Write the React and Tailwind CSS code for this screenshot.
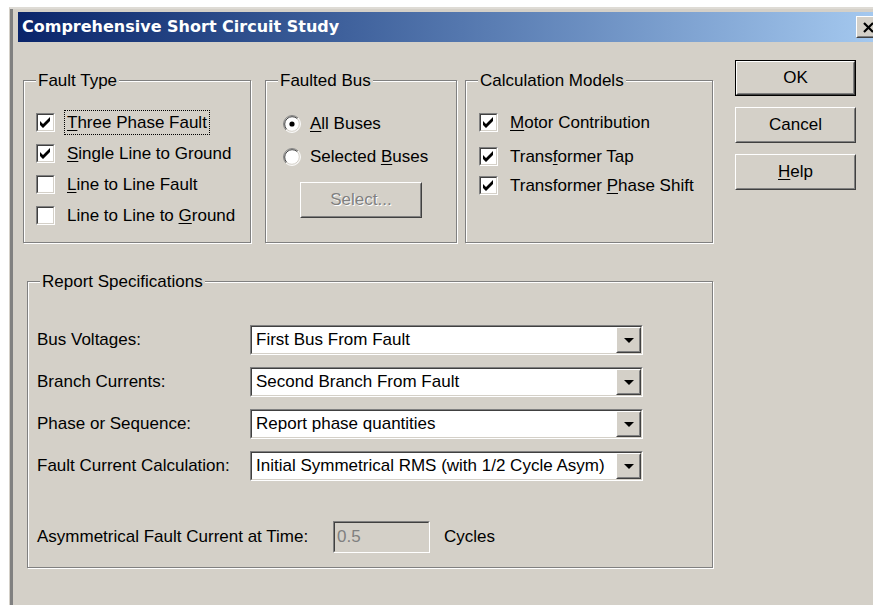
import React from 'react';

// classic 3D frames
const Raised = ({ className = '', children }) => (
  <div className={`border border-t-white border-l-white border-r-[#404040] border-b-[#404040] bg-[#d4d0c8] ${className}`}>
    <div className="w-full h-full border border-t-[#d4d0c8] border-l-[#d4d0c8] border-r-[#808080] border-b-[#808080] flex items-center justify-center">
      {children}
    </div>
  </div>
);

const Sunken = ({ className = '', inner = 'bg-white', children }) => (
  <div className={`border border-t-[#808080] border-l-[#808080] border-r-white border-b-white ${className}`}>
    <div className={`w-full h-full border border-t-[#404040] border-l-[#404040] border-r-[#d4d0c8] border-b-[#d4d0c8] ${inner}`}>
      {children}
    </div>
  </div>
);

const Group = ({ title, className = '', children }) => (
  <div className={`relative border border-[#808080] shadow-[inset_1px_1px_0_#fff,1px_1px_0_#fff] ${className}`}>
    <span className="absolute left-[12px] -top-[10px] bg-[#d4d0c8] px-[2px] leading-[20px] whitespace-nowrap">{title}</span>
    {children}
  </div>
);

const Key = ({ children }) => <span className="underline underline-offset-[2px] decoration-1">{children}</span>;

const CheckBox = ({ checked }) => (
  <Sunken className="w-[19px] h-[19px] shrink-0">
    {checked && (
      <svg width="15" height="15" viewBox="0 0 15 15" className="block">
        <polygon points="2,6 5,9 12,2 12,6 5,13 2,10" fill="#000" />
      </svg>
    )}
  </Sunken>
);

const Radio = ({ checked }) => (
  <svg width="18" height="18" viewBox="0 0 18 18" className="block shrink-0">
    <circle cx="9" cy="9" r="8" fill="#fff" />
    <path d="M2.99 15.01 A8.5 8.5 0 0 1 15.01 2.99" fill="none" stroke="#808080" strokeWidth="1" />
    <path d="M15.01 2.99 A8.5 8.5 0 0 1 2.99 15.01" fill="none" stroke="#fff" strokeWidth="1" />
    <path d="M3.7 14.3 A7.5 7.5 0 0 1 14.3 3.7" fill="none" stroke="#404040" strokeWidth="1" />
    <path d="M14.3 3.7 A7.5 7.5 0 0 1 3.7 14.3" fill="none" stroke="#d4d0c8" strokeWidth="1" />
    {checked && <circle cx="9" cy="9" r="2.6" fill="#000" />}
  </svg>
);

const Check = ({ checked, children, className = '' }) => (
  <div className={`flex items-center gap-[12px] h-[19px] whitespace-nowrap ${className}`}>
    <CheckBox checked={checked} />
    {children}
  </div>
);

const Combo = ({ value }) => (
  <Sunken className="w-[393px] h-[30px]">
    <div className="flex h-full items-center">
      <span className="flex-1 pl-[4px] whitespace-nowrap overflow-hidden">{value}</span>
      <Raised className="w-[25px] h-full">
        <svg width="10" height="5" viewBox="0 0 10 5" className="block">
          <polygon points="0,0 10,0 5,5" fill="#000" />
        </svg>
      </Raised>
    </div>
  </Sunken>
);

const reportRows = [
  ['Bus Voltages:', 'First Bus From Fault'],
  ['Branch Currents:', 'Second Branch From Fault'],
  ['Phase or Sequence:', 'Report phase quantities'],
  ['Fault Current Calculation:', 'Initial Symmetrical RMS (with 1/2 Cycle Asym)'],
];

export default function App() {
  return (
    <div className="w-[873px] h-[605px] overflow-hidden bg-white text-[17px] text-black font-['Liberation_Sans',Arial,sans-serif]">
      <div className="ml-[9px] mt-[7px] w-[900px] h-[640px] border-l border-l-[#d4d0c8] border-t-2 border-t-[#dedbd5] bg-[#d4d0c8]">
        <div className="h-full border-l-[3px] border-l-[#808080] pl-[5px] pt-[3px]">
          {/* title bar */}
          <div className="w-[864px] h-[30px] flex items-center bg-gradient-to-r from-[#0a246a] to-[#a6caf0]">
            <span className="flex-1 pl-[4px] font-bold text-[16px] text-white whitespace-nowrap font-['DejaVu_Sans',Verdana,sans-serif]">
              Comprehensive Short Circuit Study
            </span>
            <Raised className="w-[24px] h-[22px] mr-[2px]">
              <svg width="11" height="11" viewBox="0 0 11 11" className="block">
                <path d="M1 1 L10 10 M10 1 L1 10" stroke="#000" strokeWidth="2.2" />
              </svg>
            </Raised>
          </div>

          {/* dialog body */}
          <div className="flex items-start">
            <Group title="Fault Type" className="ml-[5px] mt-[38px] w-[228px] h-[163px]">
              <div className="flex flex-col gap-[12px] pt-[32px] pl-[12px]">
                <Check checked>
                  <span className="-ml-[3px] border border-dotted border-black px-[2px] leading-[23px]">
                    <Key>T</Key>hree Phase Fault
                  </span>
                </Check>
                <Check checked>
                  <span><Key>S</Key>ingle Line to Ground</span>
                </Check>
                <Check>
                  <span><Key>L</Key>ine to Line Fault</span>
                </Check>
                <Check>
                  <span>Line to Line to <Key>G</Key>round</span>
                </Check>
              </div>
            </Group>

            <Group title="Faulted Bus" className="ml-[14px] mt-[38px] w-[192px] h-[163px]">
              <div className="flex flex-col pt-[34px] pl-[17px]">
                <div className="flex items-center gap-[9px] h-[18px] whitespace-nowrap">
                  <Radio checked />
                  <span><Key>A</Key>ll Buses</span>
                </div>
                <div className="flex items-center gap-[9px] h-[18px] mt-[15px] whitespace-nowrap">
                  <Radio />
                  <span>Selected <Key>B</Key>uses</span>
                </div>
                <Raised className="ml-[17px] mt-[16px] w-[122px] h-[36px]">
                  <span className="text-[#808080] [text-shadow:1px_1px_0_#fff]">Select...</span>
                </Raised>
              </div>
            </Group>

            <Group title="Calculation Models" className="ml-[8px] mt-[38px] w-[248px] h-[163px]">
              <div className="flex flex-col pt-[32px] pl-[13px]">
                <Check checked className="gap-[11px]">
                  <span><Key>M</Key>otor Contribution</span>
                </Check>
                <Check checked className="gap-[11px] mt-[15px]">
                  <span>Trans<Key>f</Key>ormer Tap</span>
                </Check>
                <Check checked className="gap-[11px] mt-[10px]">
                  <span>Transformer <Key>P</Key>hase Shift</span>
                </Check>
              </div>
            </Group>

            <div className="ml-[22px] mt-[18px] flex flex-col gap-[11px]">
              <div className="border border-black">
                <Raised className="w-[119px] h-[34px]">OK</Raised>
              </div>
              <Raised className="w-[121px] h-[36px]">Cancel</Raised>
              <Raised className="w-[121px] h-[36px]">
                <span><Key>H</Key>elp</span>
              </Raised>
            </div>
          </div>

          <Group title="Report Specifications" className="ml-[9px] mt-[38px] w-[686px] h-[287px]">
            <div className="flex flex-col gap-[12px] pt-[43px] pl-[9px]">
              {reportRows.map(([label, value]) => (
                <div key={label} className="flex items-center">
                  <span className="w-[213px] whitespace-nowrap">{label}</span>
                  <Combo value={value} />
                </div>
              ))}
              <div className="flex items-center mt-[28px]">
                <span className="w-[296px] whitespace-nowrap">Asymmetrical Fault Current at Time:</span>
                <Sunken className="w-[97px] h-[32px]" inner="bg-[#d4d0c8]">
                  <div className="h-full flex items-center pl-[2px] text-[#808080]">0.5</div>
                </Sunken>
                <span className="ml-[14px]">Cycles</span>
              </div>
            </div>
          </Group>
        </div>
      </div>
    </div>
  );
}
